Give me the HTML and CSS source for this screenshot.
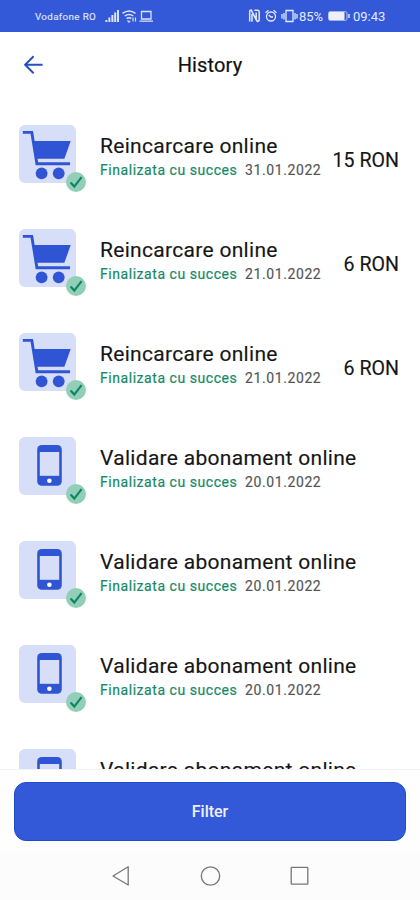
FILE: index.html
```
<!DOCTYPE html>
<html lang="ro">
<head>
<meta charset="utf-8">
<title>History</title>
<link rel="stylesheet" href="styles.css">
</head>
<body>
<svg class="defs" width="0" height="0" aria-hidden="true">
  <symbol id="check" viewBox="0 0 20 20">
    <circle cx="10" cy="10" r="10" fill="#92cfb7"/>
    <path d="M4.6 10.6 8.3 14.6 15.6 5.2" fill="none" stroke="#138465" stroke-width="2.2"/>
  </symbol>
  <symbol id="cart" viewBox="0 0 57 57">
    <path d="M3.8 7.4H12.8L17.9 38.7H51" fill="none" stroke="#2f55d4" stroke-width="2.9"/>
    <path d="M14 16H51.7L45.4 33.8H17Z" fill="#2f55d4"/>
    <circle cx="22.6" cy="48.3" r="5.9" fill="#2f55d4"/>
    <circle cx="39.7" cy="48.3" r="5.9" fill="#2f55d4"/>
  </symbol>
  <symbol id="phone" viewBox="0 0 57 57">
    <rect x="18.2" y="8" width="24.6" height="40.8" rx="4.5" fill="#2f55d4"/>
    <rect x="20.8" y="15" width="19.4" height="23.8" fill="#d7dff8"/>
    <circle cx="30.4" cy="43.7" r="2.3" fill="#fff"/>
  </symbol>
</svg>
<div class="screen">
  <div class="status">
    <span class="carrier">Vodafone RO</span>
    <svg class="signals" width="50" height="14" viewBox="0 0 50 14" fill="none" stroke="#dbe3fb">
      <path d="M1.4 13v-2M4.4 13V8.5M7.4 13V6M10.2 13V3.5M13 13V1" stroke-width="2"/>
      <path d="M17.5 4.3Q24 -.5 30.5 4.3M19.7 7Q24 3.8 28.3 7M21.7 9.5Q24 8 26.3 9.5" stroke-width="1.5"/>
      <path d="M22.5 11.5 24 13 25 11.8M28 8.5v4M30.5 12.5v-4" stroke-width="1.2"/>
      <path d="M36.5 2.5h9.5v7.5H36.5ZM34.5 12.2h13.5" stroke-width="1.3"/>
    </svg>
    <svg class="modes" width="50" height="14" viewBox="0 0 50 14" fill="none" stroke="#e3e9fc">
      <path d="M1.7 12.5V2.5q0-1.5 1.5-1.5L8.2 10.8V3.4M4 12.8V5M6.3 1.2h3.3q1.6 0 1.6 1.6v7.6q0 2-1.9 2L4.2 3" stroke-width="1.5"/>
      <circle cx="23" cy="7.5" r="4.5" stroke-width="1.3"/>
      <path d="M17.5 3.8 20.5 1.2M25.5 1.2l3 2.6M20.7 6l2.3 2h2" stroke-width="1.3"/>
      <path d="M38 1.5h7v11h-7ZM36 4v6.5M47 4v6.5M34 5v4.5M49 5v4.5" stroke-width="1.3"/>
    </svg>
    <span class="percent">85%</span>
    <svg class="battery" width="23" height="10" viewBox="0 0 23 10">
      <rect x=".5" y=".7" width="18.5" height="8.6" rx="1.5" fill="none" stroke="#b9c8f7"/>
      <rect x="1" y="1" width="15.5" height="8" rx="1" fill="#eef1fd"/>
      <path d="M21 3v4" stroke="#dbe3fb" stroke-width="1.5"/>
    </svg>
    <span class="clock">09:43</span>
  </div>
  <header class="header">
    <svg class="back" width="20" height="20" viewBox="0 0 20 20" fill="none" stroke="#2450c8" stroke-width="2"><path d="M18.6 9.8H1.5M9.6 1.3 1.1 9.8 9.6 18.3"/></svg>
    <h1 class="heading">History</h1>
  </header>
  <main class="list">
    <div class="row"><div class="tile"><svg class="icon"><use href="#cart"/></svg><svg class="badge"><use href="#check"/></svg></div><div class="info"><div class="name">Reincarcare online</div><div class="meta"><span class="state">Finalizata cu succes</span><span class="date">31.01.2022</span></div></div><div class="amount">15 RON</div></div>
    <div class="row"><div class="tile"><svg class="icon"><use href="#cart"/></svg><svg class="badge"><use href="#check"/></svg></div><div class="info"><div class="name">Reincarcare online</div><div class="meta"><span class="state">Finalizata cu succes</span><span class="date">21.01.2022</span></div></div><div class="amount">6 RON</div></div>
    <div class="row"><div class="tile"><svg class="icon"><use href="#cart"/></svg><svg class="badge"><use href="#check"/></svg></div><div class="info"><div class="name">Reincarcare online</div><div class="meta"><span class="state">Finalizata cu succes</span><span class="date">21.01.2022</span></div></div><div class="amount">6 RON</div></div>
    <div class="row"><div class="tile"><svg class="icon"><use href="#phone"/></svg><svg class="badge"><use href="#check"/></svg></div><div class="info"><div class="name">Validare abonament online</div><div class="meta"><span class="state">Finalizata cu succes</span><span class="date">20.01.2022</span></div></div></div>
    <div class="row"><div class="tile"><svg class="icon"><use href="#phone"/></svg><svg class="badge"><use href="#check"/></svg></div><div class="info"><div class="name">Validare abonament online</div><div class="meta"><span class="state">Finalizata cu succes</span><span class="date">20.01.2022</span></div></div></div>
    <div class="row"><div class="tile"><svg class="icon"><use href="#phone"/></svg><svg class="badge"><use href="#check"/></svg></div><div class="info"><div class="name">Validare abonament online</div><div class="meta"><span class="state">Finalizata cu succes</span><span class="date">20.01.2022</span></div></div></div>
    <div class="row"><div class="tile"><svg class="icon"><use href="#phone"/></svg></div><div class="info"><div class="name">Validare abonament online</div></div></div>
  </main>
  <footer class="footer"><button class="filter">Filter</button></footer>
  <nav class="nav">
    <svg width="200" height="22" viewBox="0 0 200 22" fill="none" stroke="#777" stroke-width="1.3">
      <path d="M18.2 1.8V20L3 11Z" stroke-linejoin="round"/>
      <circle cx="100.5" cy="11" r="9.2"/>
      <rect x="181.2" y="2.4" width="16.6" height="16.8" rx=".5"/>
    </svg>
  </nav>
</div>
</body>
</html>
```
FILE: styles.css
```
* { box-sizing: border-box; }
body { margin: 0; background: #fff; font-family: Roboto, "Liberation Sans", sans-serif; color: #161616; }
.defs { position: absolute; }
.screen { width: 420px; height: 900px; display: flex; flex-direction: column; overflow: hidden; }
.status { height: 32px; flex: none; background: #3459d8; color: #e3e9fc; display: flex; align-items: center; padding-left: 35px; white-space: nowrap; }
.carrier { width: 62px; font-size: 9.8px; letter-spacing: .35px; margin-right: 8px; padding-top: 1px; -webkit-text-stroke: .1px #e3e9fc; }
.signals { flex: none; }
.modes { flex: none; margin-left: 93px; }
.percent { width: 25px; margin-left: 1px; font-size: 13px; letter-spacing: -.1px; padding-top: 1px; }
.battery { flex: none; margin-left: 4px; }
.clock { margin-left: 2px; font-size: 13px; padding-top: 1px; }
.header { height: 66px; flex: none; display: flex; align-items: center; padding-left: 24px; }
.back { flex: none; }
.heading { margin: 0 44px 0 0; flex: 1; text-align: center; font-size: 20px; font-weight: 400; letter-spacing: .15px; color: #111; -webkit-text-stroke: .2px #111; }
.list { flex: none; height: 672px; overflow: hidden; border-bottom: 1px solid #f3f3f3; }
.row { height: 104px; display: flex; padding: 27px 21px 0 19px; }
.tile { position: relative; flex: none; width: 57px; height: 58px; border-radius: 6px; background: #d7dff8; }
.icon { display: block; width: 57px; height: 57px; }
.badge { position: absolute; left: 47px; top: 47px; width: 20px; height: 20px; }
.info { margin-left: 24px; padding-top: 9px; white-space: nowrap; }
.name { font-size: 21px; line-height: 25px; letter-spacing: .3px; -webkit-text-stroke: .15px #161616; }
.meta { display: flex; gap: 7px; font-size: 14px; line-height: 18px; margin-top: 2px; }
.state { width: 138px; color: #168a68; letter-spacing: .55px; -webkit-text-stroke: .2px #168a68; }
.date { color: #555; letter-spacing: .6px; -webkit-text-stroke: .15px #555; }
.amount { margin-left: auto; padding-top: 23px; font-size: 19.6px; line-height: 25px; -webkit-text-stroke: .15px #161616; }
.footer { height: 82px; flex: none; padding: 12px 14px; background: #fefefe; }
.filter { display: block; width: 392px; height: 59px; border: 1px solid #204ccb; border-radius: 12px; background: #3459d8; color: #eef1fd; font: 500 16px Roboto, sans-serif; }
.nav { height: 48px; flex: none; background: #fcfcfc; display: flex; justify-content: center; padding-top: 13px; }
```
